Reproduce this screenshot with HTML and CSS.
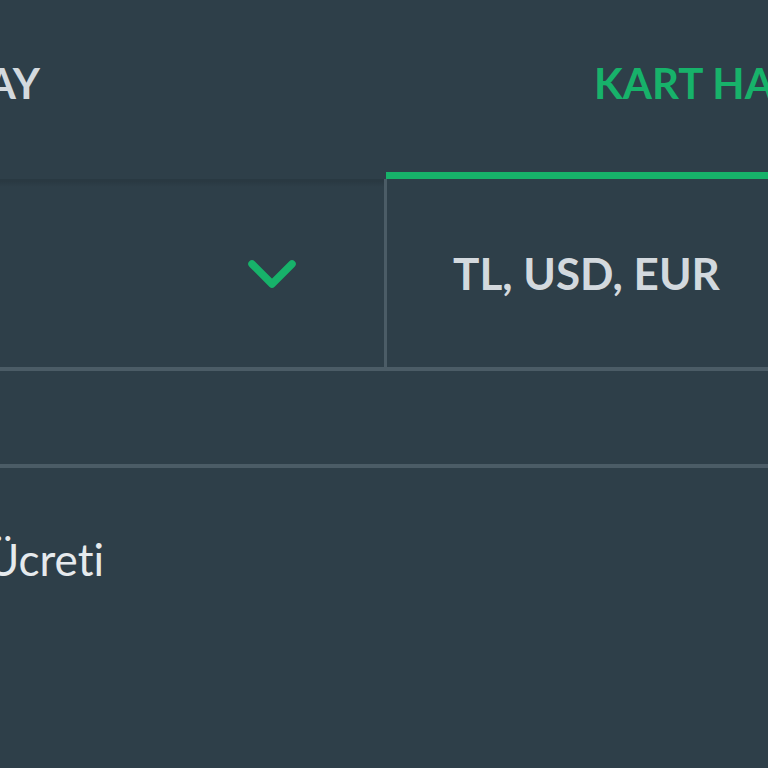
FILE: index.html
```html
<!DOCTYPE html>
<html lang="tr">
<head>
<meta charset="utf-8">
<link rel="stylesheet" href="styles.css">
</head>
<body>
<div class="page">
  <div class="tabs">
    <div class="tab tab-left"><span class="tab-label">KOLAY</span></div>
    <div class="tab tab-right active"><span class="tab-label">KART HAMİLİNE ÖDEME</span></div>
  </div>
  <div class="row row-select">
    <div class="cell cell-select">
      <svg class="chevron" viewBox="0 0 50 30" width="50" height="30" aria-hidden="true">
        <polyline points="5,5 25,25 45,5" fill="none" stroke="#17b26a" stroke-width="7.5" stroke-linecap="round" stroke-linejoin="round"/>
      </svg>
    </div>
    <div class="cell cell-currency">TL, USD, EUR</div>
  </div>
  <div class="row row-empty"></div>
  <div class="row row-fee"><span class="fee-label">İşlem Ücreti</span></div>
</div>
</body>
</html>
```

FILE: styles.css
```css
html, body {
  margin: 0;
  padding: 0;
  background: #2e3f49;
  overflow: hidden;
}
.page {
  width: 768px;
  height: 768px;
  overflow: hidden;
  font-family: "Lato", "Noto Sans", sans-serif;
  font-variant-ligatures: none;
}
.tabs {
  display: flex;
  height: 179px;
}
.tab {
  display: flex;
  align-items: center;
  white-space: nowrap;
  font-weight: 700;
  font-size: 42px;
  box-sizing: border-box;
}
.tab-left {
  width: 386px;
  justify-content: flex-end;
  padding-right: 346px;
  color: #d3d9de;
  padding-bottom: 13px;
}
.tab-right {
  width: 382px;
  padding-left: 208px;
  color: #17b26a;
  border-bottom: 7px solid #17b26a;
  padding-bottom: 6px;
}
.row {
  display: flex;
  box-sizing: border-box;
}
.row-select {
  height: 192px;
  border-bottom: 4px solid #4b5c66;
}
.cell {
  display: flex;
  align-items: center;
  box-sizing: border-box;
}
.cell-select {
  width: 387px;
  justify-content: flex-end;
  padding-right: 87px;
  border-right: 3px solid #4b5c66;
  background: linear-gradient(to bottom, rgba(0,0,0,0.10) 0, rgba(0,0,0,0.10) 2px, rgba(0,0,0,0) 8px);
}
.chevron {
  display: block;
  margin-top: 2px;
}
.cell-currency {
  flex: 1;
  padding-left: 66px;
  font-size: 44px;
  font-weight: 700;
  color: #d3d9de;
}
.row-empty {
  height: 97px;
  border-bottom: 4px solid #4b5c66;
}
.row-fee {
  width: 104px;
  justify-content: flex-end;
  white-space: nowrap;
  padding-top: 65px;
  font-size: 44px;
  color: #e6eaed;
}
.fee-label {
  display: block;
}
```
